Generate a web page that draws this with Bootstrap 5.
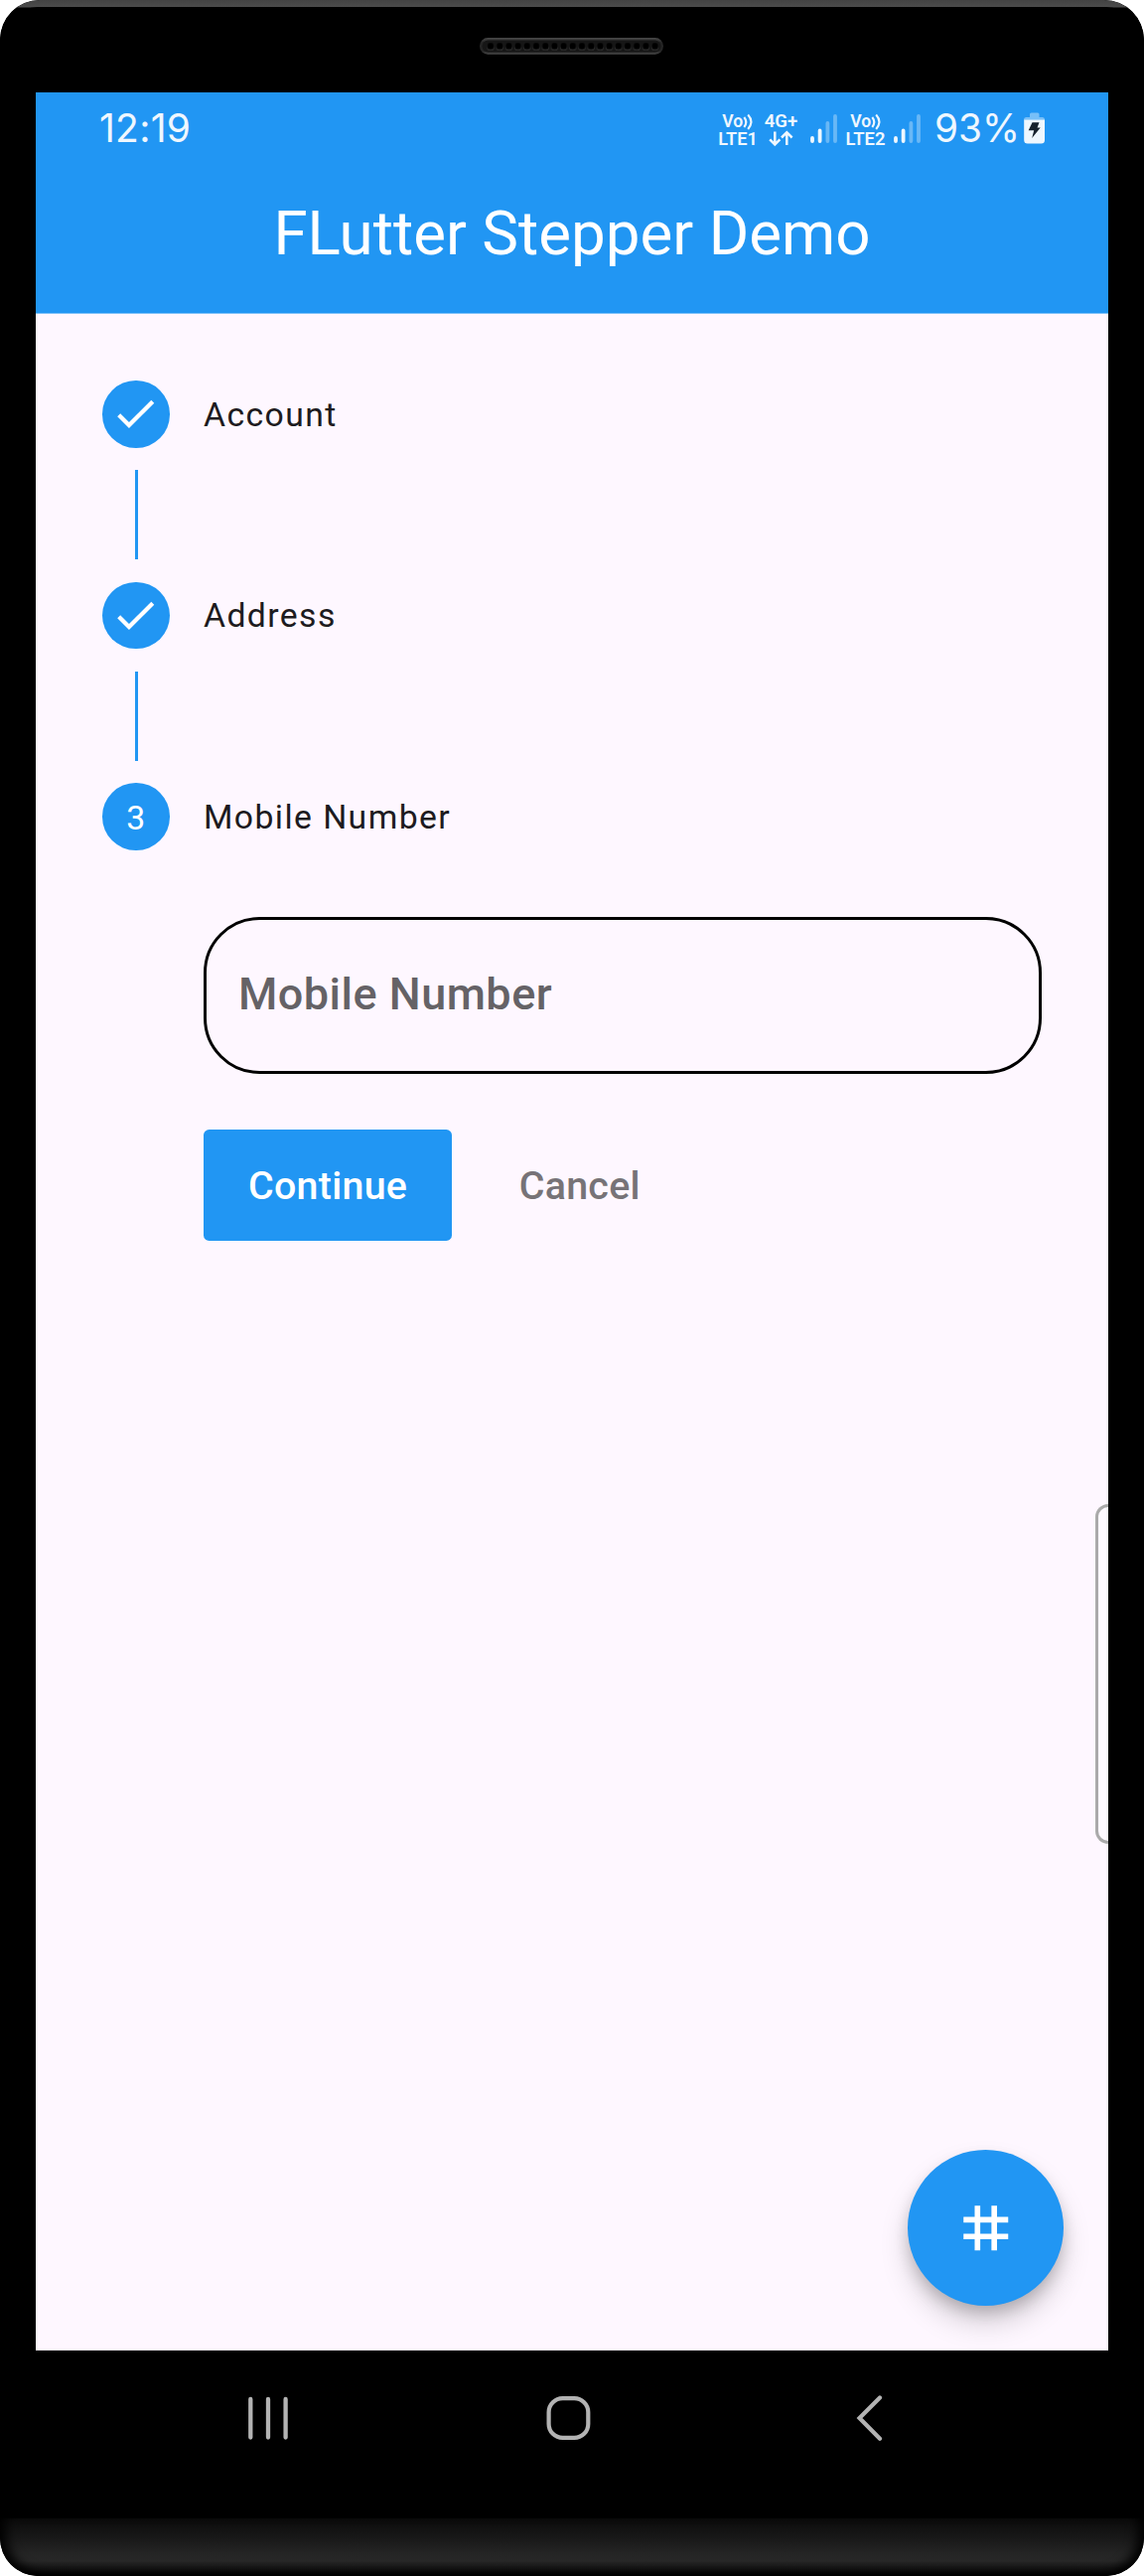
<!DOCTYPE html>
<html lang="en">
<head>
<meta charset="utf-8">
<title>FLutter Stepper Demo</title>
<link rel="stylesheet" href="https://cdn.jsdelivr.net/npm/bootstrap@5.3.0/dist/css/bootstrap.min.css">
<style>
:root{--blue:#2196f3;--surface:#fef7ff}
body{background:#fff;font-family:Roboto,sans-serif;line-height:1}
.phone{width:1152px;height:2593px;background:#000;border-radius:40px 40px 38px 38px}
.bezel-top{height:93px;background:linear-gradient(#434343,#4b4b4b 7px,#000 8px);border-radius:40px 40px 0 0}
.bezel-top::before{content:"";position:absolute;inset:7px 5px 0;background:#000;border-radius:33px 33px 0 0}
.bezel-top::after{content:"";position:absolute;inset:0;border-radius:inherit;background:linear-gradient(transparent 12px,#000 42px);}
.speaker{margin-top:38px;z-index:2}
.screen{width:1080px;height:2273px;background:var(--surface);margin-left:36px}
.app-header{height:222px;border-bottom:1px solid #7fc1f8;box-sizing:content-box;background:var(--blue)}
.status{height:64.5px;padding:0 63px 0 64px;color:#eff7fe}
.clock{font:400 39px/1 Inter,sans-serif;letter-spacing:.25px;padding-top:16px}
.app-title{font-size:61.875px;line-height:155px;letter-spacing:0}
.steps{padding:67px 67px 0}
.step-row{height:67.5px;gap:34.5px;font-size:33.75px;letter-spacing:1.4px;color:#1d1b20}
.step-row span{padding-top:2px}
.dot{width:67.5px;height:67.5px;background:var(--blue);letter-spacing:0;flex:none}
.rail{width:3px;height:90px;margin:22.5px 0 22.5px 33px;background:var(--blue)}
.step-body{padding:67px 0 0 102px}
.phone-field{height:158px;border:3px solid #000;border-radius:56.25px;background:transparent;padding:0 32px 3px;font-size:45px;font-weight:500;letter-spacing:.48px;box-shadow:none}
.phone-field::placeholder{color:#656266;opacity:1}
.actions{margin-top:56px}
.actions .btn{height:112.5px;font-size:39.375px;font-weight:500;border:0;border-radius:5.6px;line-height:112.5px;padding:1px 45px 0;letter-spacing:.28px}
.btn-go,.btn-go:hover{background:var(--blue);color:#fff}
.btn-stop{color:#777377;margin-left:22.5px}
.edge{right:0;top:1421px;width:13px;height:342px;border:3px solid #aaa;border-right:0;border-radius:13px 0 0 13px;background:#fdf9ff}
.fab{right:45px;bottom:45px;width:157.5px;height:157.5px;background:var(--blue);box-shadow:0 17px 28px rgba(0,0,0,.17),0 8px 16px -2px rgba(0,0,0,.2)}
.navkeys{height:169px;padding:45px 261px 0 249px}
.home-key{margin-left:-9px}
.chin{height:58px;border-radius:0 0 38px 38px;background:linear-gradient(#0b0b0b,#181818 20px,#252525 36px,#272727 43px,#111 53px,#000);box-shadow:inset 10px -4px 12px -4px #000,inset -10px -4px 12px -4px #000}
svg{display:block}
</style>
</head>
<body>
<main class="phone overflow-hidden d-flex flex-column">
  <div class="bezel-top position-relative d-flex justify-content-center align-items-start flex-shrink-0">
    <svg class="speaker position-relative" width="186" height="17" viewBox="0 0 186 17">
      <defs>
        <linearGradient id="rim" x1="0" y1="0" x2="0" y2="1"><stop stop-color="#484848"/><stop offset=".3" stop-color="#242424"/><stop offset=".8" stop-color="#252525"/><stop offset="1" stop-color="#4a4a4a"/></linearGradient>
        <pattern id="holes" x="6.4" y="4.5" width="9.2" height="9" patternUnits="userSpaceOnUse"><circle cx="4.6" cy="4.7" r="3.6" fill="#4b4b4b"/><circle cx="4.6" cy="4.1" r="3.5" fill="#000"/></pattern>
      </defs>
      <rect width="185" height="16.7" rx="8.3" fill="url(#rim)"/><rect x="2.5" y="2.5" width="180" height="12" rx="6" fill="#161616"/>
      <rect x="6.4" y="4.5" width="174.8" height="9" fill="url(#holes)"/>
    </svg>
  </div>

  <section class="screen position-relative overflow-hidden flex-shrink-0">
    <header class="app-header text-white">
      <div class="status d-flex justify-content-between align-items-start">
        <div class="clock">12:19</div>
        <svg width="330" height="64" viewBox="723 93 330 64" fill="#eff7fe" font-family="Roboto, sans-serif" font-weight="600" font-size="18.5">
          <g id="volte">
            <text x="727.3" y="128.3" textLength="21" lengthAdjust="spacingAndGlyphs">Vo</text>
            <path d="M749.3 118q4 5 0 10M753.2 115.500q6.400 7 0 14.500" fill="none" stroke="#eff7fe" stroke-width="2.1"/>
          </g>
          <text x="723.300" y="145.500" textLength="39.500" lengthAdjust="spacingAndGlyphs">LTE1</text>
          <text x="769.700" y="128.300" textLength="33.500" lengthAdjust="spacingAndGlyphs">4G+</text>
          <path d="M780.300 132.500V145M775.200 140.300l5.100 5.100 5.100-5.100M792.300 146V133.500M787 138.500l5.300-5.300 5.300 5.300" fill="none" stroke="#eff7fe" stroke-width="2.500"/>
          <g id="signal" stroke="#eff7fe" stroke-width="3.800" stroke-linecap="round"><path d="M818 139v3M825.600 131.500V142"/><path d="M833.400 124V142M841 117V142" opacity=".35"/></g>
          <use href="#volte" x="129"/>
          <text x="851.500" y="145.500" textLength="40" lengthAdjust="spacingAndGlyphs">LTE2</text>
          <use href="#signal" x="84"/>
          <text x="941" y="143.400" font-family="Inter, sans-serif" font-weight="400" font-size="39" textLength="86" lengthAdjust="spacingAndGlyphs">93%</text>
          <path d="M1037 118v-3q0-1.500 1.500-1.500h6.500q1.500 0 1.500 1.500v3h3q2.500 0 2.500 2.700h-21q0-2.700 2.500-2.700z" opacity=".42"/>
          <path d="M1031.200 120.500h20.800v20.500q0 3.500-3.500 3.500h-13.800q-3.500 0-3.500-3.500z"/>
          <path d="M1039.500 123.200h7l-2 5.300h3.200l-8.500 10.500 2-7.800h-5.500z" fill="#17212c"/>
        </svg>
      </div>
      <h1 class="app-title text-center fw-normal m-0">FLutter Stepper Demo</h1>
    </header>

    <div class="steps">
      <div class="step-row d-flex align-items-center">
        <div class="dot rounded-circle d-flex align-items-center justify-content-center"><svg width="50.6" height="50.6" viewBox="0 0 24 24" fill="#fff"><path d="M9 16.170L4.830 12l-1.420 1.410L9 19 21 7l-1.410-1.410z"/></svg></div>
        <span>Account</span>
      </div>
      <div class="rail"></div>
      <div class="step-row d-flex align-items-center">
        <div class="dot rounded-circle d-flex align-items-center justify-content-center"><svg width="50.6" height="50.6" viewBox="0 0 24 24" fill="#fff"><path d="M9 16.170L4.830 12l-1.420 1.410L9 19 21 7l-1.410-1.410z"/></svg></div>
        <span>Address</span>
      </div>
      <div class="rail"></div>
      <div class="step-row d-flex align-items-center">
        <div class="dot rounded-circle d-flex align-items-center justify-content-center text-white pt-1">3</div>
        <span>Mobile Number</span>
      </div>
      <form class="step-body">
        <input class="form-control phone-field" type="tel" placeholder="Mobile Number">
        <div class="actions d-flex">
          <button type="button" class="btn btn-go">Continue</button>
          <button type="button" class="btn btn-stop">Cancel</button>
        </div>
      </form>
    </div>

    <div class="edge position-absolute"></div>
    <button type="button" class="fab btn rounded-circle position-absolute border-0 p-0 d-flex align-items-center justify-content-center">
      <svg width="67.5" height="67.5" viewBox="0 0 24 24" fill="#fff"><path d="M20 10V8h-4V4h-2v4h-4V4H8v4H4v2h4v4H4v2h4v4h2v-4h4v4h2v-4h4v-2h-4v-4h4zm-6 4h-4v-4h4v4z"/></svg>
    </button>
  </section>

  <nav class="navkeys d-flex justify-content-between align-items-start flex-shrink-0">
    <svg width="42" height="47" viewBox="0 0 42 47" stroke="#b3b3b3" stroke-width="4.3" stroke-linecap="round"><path d="M3.300 4v38.500M21 4v38.500M38.600 4v38.500"/></svg>
    <svg class="home-key" width="46" height="47" viewBox="0 0 46 47" fill="none" stroke="#b3b3b3" stroke-width="4.200"><rect x="3.600" y="3.200" width="39.700" height="39.700" rx="14"/></svg>
    <svg width="29" height="47" viewBox="0 0 29 47" fill="none" stroke="#b3b3b3" stroke-width="4.200" stroke-linecap="round"><path d="M24 2.400L3.500 23 24 43.700"/></svg>
  </nav>
  <div class="chin flex-shrink-0"></div>
</main>
<script src="https://cdn.jsdelivr.net/npm/bootstrap@5.3.0/dist/js/bootstrap.bundle.min.js"></script>
</body>
</html>
